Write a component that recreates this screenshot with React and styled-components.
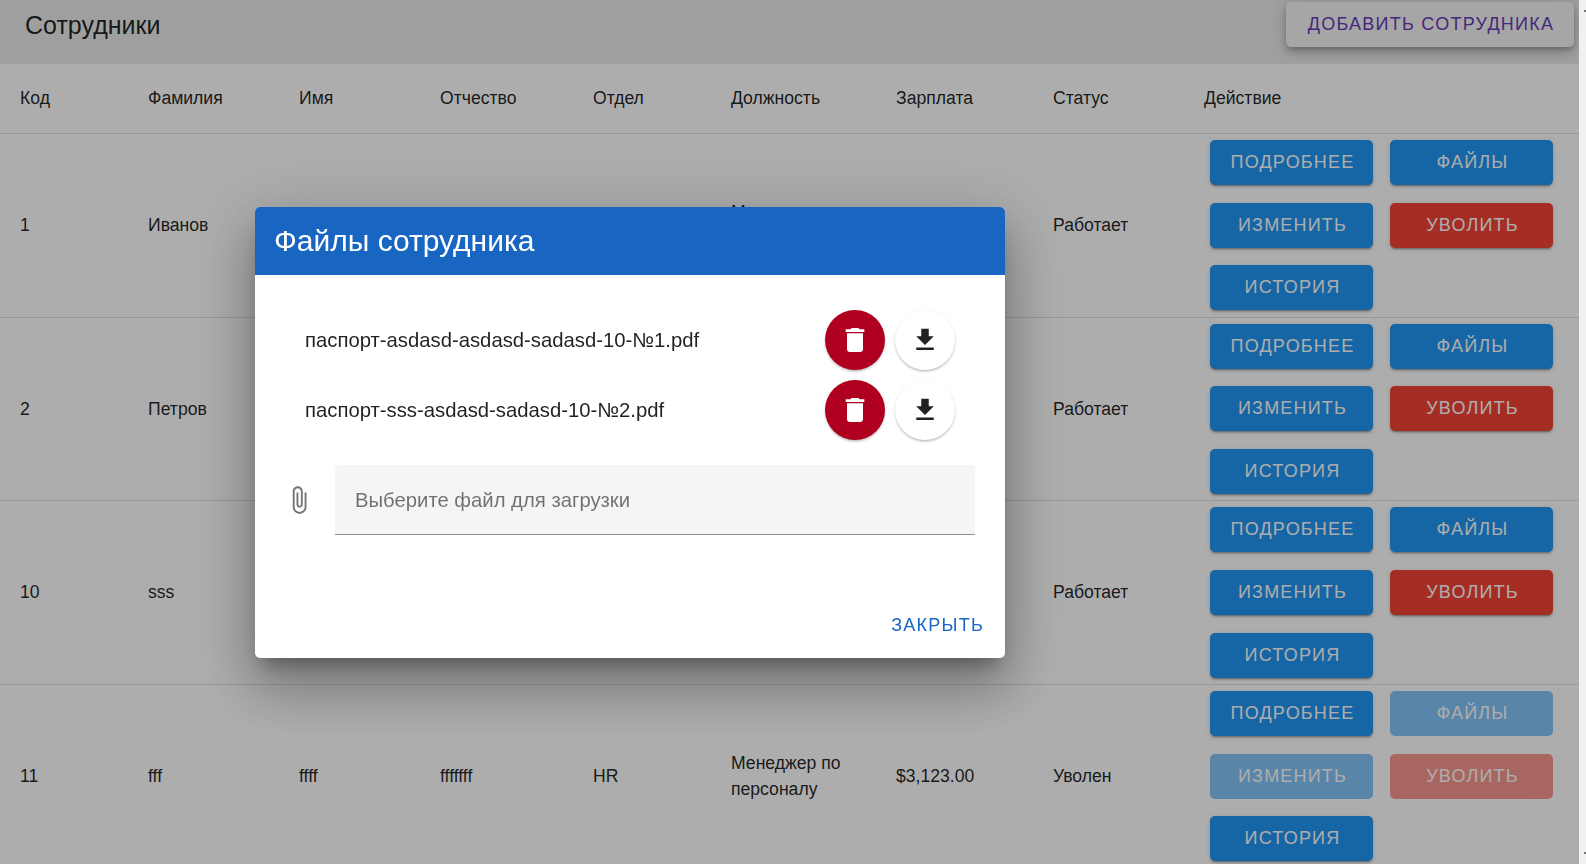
import styled, { createGlobalStyle } from "styled-components";

const employees = [
  { id: 1, last: "Иванов", first: "Иван", middle: "Иванович", dept: "HR", post: "Менеджер по персоналу", salary: "$1,000.00", status: "Работает" },
  { id: 2, last: "Петров", first: "Петр", middle: "Петрович", dept: "IT", post: "Программист", salary: "$2,000.00", status: "Работает" },
  { id: 10, last: "sss", first: "asdasd", middle: "sadasd", dept: "IT", post: "Программист", salary: "$1,500.00", status: "Работает" },
  { id: 11, last: "fff", first: "ffff", middle: "fffffff", dept: "HR", post: "Менеджер по персоналу", salary: "$3,123.00", status: "Уволен", fired: true },
];

const columns = ["Код", "Фамилия", "Имя", "Отчество", "Отдел", "Должность", "Зарплата", "Статус", "Действие"];

const files = ["паспорт-asdasd-asdasd-sadasd-10-№1.pdf", "паспорт-sss-asdasd-sadasd-10-№2.pdf"];

const TrashIcon = () => (
  <svg width="32" height="32" viewBox="0 0 24 24" fill="currentColor">
    <path d="M6 19c0 1.1.9 2 2 2h8c1.1 0 2-.9 2-2V7H6v12zM19 4h-3.5l-1-1h-5l-1 1H5v2h14V4z" />
  </svg>
);

const DownloadIcon = () => (
  <svg width="30" height="30" viewBox="0 0 24 24" fill="currentColor">
    <path d="M19 9h-4V3H9v6H5l7 7 7-7zM5 18v2h14v-2H5z" />
  </svg>
);

const ClipIcon = () => (
  <svg width="30" height="30" viewBox="0 0 24 24" fill="currentColor">
    <path d="M16.5 6v11.5c0 2.21-1.79 4-4 4s-4-1.79-4-4V5c0-1.38 1.12-2.5 2.5-2.5s2.5 1.12 2.5 2.5v10.5c0 .55-.45 1-1 1s-1-.45-1-1V6H10v9.5c0 1.38 1.12 2.5 2.5 2.5s2.5-1.12 2.5-2.5V5c0-2.21-1.79-4-4-4S7 2.79 7 5v12.5c0 3.04 2.46 5.5 5.5 5.5s5.5-2.46 5.5-5.5V6h-1.5z" />
  </svg>
);

const App = () => {
  return (
    <>
      <GlobalStyle />
      <Toolbar>
        <Title>Сотрудники</Title>
        <AddButton>Добавить сотрудника</AddButton>
      </Toolbar>
      <HeadRow>
        {columns.map((name) => (
          <div key={name}>{name}</div>
        ))}
      </HeadRow>
      {employees.map((e) => (
        <Row key={e.id}>
          <div>{e.id}</div>
          <div>{e.last}</div>
          <div>{e.first}</div>
          <div>{e.middle}</div>
          <div>{e.dept}</div>
          <div>{e.post}</div>
          <div>{e.salary}</div>
          <div>{e.status}</div>
          <Actions>
            <ActionButton>Подробнее</ActionButton>
            <ActionButton disabled={e.fired}>Файлы</ActionButton>
            <ActionButton disabled={e.fired}>Изменить</ActionButton>
            <ActionButton $danger disabled={e.fired}>
              Уволить
            </ActionButton>
            <ActionButton>История</ActionButton>
          </Actions>
        </Row>
      ))}
      <Overlay>
        <Dialog>
          <DialogHeader>Файлы сотрудника</DialogHeader>
          <DialogBody>
            {files.map((name) => (
              <FileRow key={name}>
                <FileName>{name}</FileName>
                <RoundButton $danger>
                  <TrashIcon />
                </RoundButton>
                <RoundButton>
                  <DownloadIcon />
                </RoundButton>
              </FileRow>
            ))}
            <UploadRow>
              <ClipBox>
                <ClipIcon />
              </ClipBox>
              <UploadField>Выберите файл для загрузки</UploadField>
            </UploadRow>
          </DialogBody>
          <DialogFooter>
            <CloseButton>Закрыть</CloseButton>
          </DialogFooter>
        </Dialog>
      </Overlay>
      <ScrollTrack />
    </>
  );
};

const GlobalStyle = createGlobalStyle`
  html {
    background: #f1f1f1;
  }
  body {
    margin: 0 7px 0 0;
    background: #fff;
    font-family: "Liberation Sans", Arial, sans-serif;
    color: rgba(0, 0, 0, 0.87);
  }
  * {
    box-sizing: border-box;
  }
`;

const ScrollTrack = styled.div`
  position: fixed;
  top: 0;
  right: 0;
  bottom: 0;
  width: 7px;
  background: #f1f1f1;
  &::before,
  &::after {
    content: "";
    position: absolute;
    right: 0;
    width: 2px;
    height: 2px;
    background: #777;
  }
  &::before {
    top: 10px;
  }
  &::after {
    bottom: 10px;
  }
`;

const Toolbar = styled.div`
  height: 64px;
  background: #ebebeb;
  display: flex;
  justify-content: space-between;
  align-items: flex-start;
  padding: 2px 5px 0 25px;
`;

const Title = styled.div`
  font-size: 25px;
  line-height: 46px;
`;

const AddButton = styled.button`
  width: 288px;
  height: 45px;
  padding: 0 0 0 2px;
  border: 0;
  border-radius: 5px;
  background: #f5f5f5;
  color: #673ab7;
  font-family: inherit;
  font-size: 18px;
  letter-spacing: 1.25px;
  text-transform: uppercase;
  box-shadow: 0 3px 5px -1px rgba(0, 0, 0, 0.2), 0 6px 10px 0 rgba(0, 0, 0, 0.14), 0 1px 18px 0 rgba(0, 0, 0, 0.12);
`;

const tableColumns = "128px 151px 141px 153px 138px 165px 157px 151px 1fr";

const HeadRow = styled.div`
  display: grid;
  grid-template-columns: ${tableColumns};
  align-items: center;
  height: 70px;
  padding-left: 20px;
  font-size: 17.6px;
  border-bottom: 1px solid rgba(0, 0, 0, 0.12);
`;

const Row = styled.div`
  display: grid;
  grid-template-columns: ${tableColumns};
  align-items: center;
  height: 183.6px;
  padding-left: 20px;
  font-size: 17.6px;
  line-height: 26px;
  border-bottom: 1px solid rgba(0, 0, 0, 0.12);
`;

const Actions = styled.div`
  display: grid;
  grid-template-columns: 163px 163px;
  gap: 17.6px 17px;
  padding-left: 6px;
`;

const ActionButton = styled.button`
  height: 45px;
  padding: 0 0 0 2px;
  border: 0;
  border-radius: 5px;
  background: ${(props) => (props.$danger ? "#f44336" : "#2196f3")};
  color: #fff;
  font-family: inherit;
  font-size: 18px;
  letter-spacing: 1.2px;
  text-transform: uppercase;
  box-shadow: 0 3px 1px -2px rgba(0, 0, 0, 0.2), 0 2px 2px 0 rgba(0, 0, 0, 0.14), 0 1px 5px 0 rgba(0, 0, 0, 0.12);
  &:disabled {
    opacity: 0.55;
    box-shadow: none;
  }
`;

const Overlay = styled.div`
  position: fixed;
  inset: 0 7px 0 0;
  background: rgba(0, 0, 0, 0.32);
`;

const Dialog = styled.div`
  position: absolute;
  left: 255px;
  top: 207px;
  width: 750px;
  height: 451px;
  display: flex;
  flex-direction: column;
  background: #fff;
  border-radius: 5px;
  box-shadow: 0 14px 18px -8px rgba(0, 0, 0, 0.32), 0 32px 50px 4px rgba(0, 0, 0, 0.2), 0 12px 64px 12px rgba(0, 0, 0, 0.14);
`;

const DialogHeader = styled.div`
  height: 68px;
  padding-left: 19px;
  display: flex;
  align-items: center;
  background: #1866c2;
  color: #fff;
  font-size: 30px;
  border-radius: 5px 5px 0 0;
`;

const DialogBody = styled.div`
  flex: 1;
  padding: 35px 30px 0 29px;
`;

const FileRow = styled.div`
  display: flex;
  align-items: center;
  gap: 10px;
  padding: 0 20px 0 21px;
  height: 60px;
  margin-bottom: 10px;
`;

const FileName = styled.div`
  flex: 1;
  font-size: 20.3px;
`;

const RoundButton = styled.div`
  width: 60px;
  height: 60px;
  border-radius: 50%;
  display: flex;
  align-items: center;
  justify-content: center;
  background: ${(props) => (props.$danger ? "#b00020" : "#fff")};
  color: ${(props) => (props.$danger ? "#fff" : "rgba(0, 0, 0, 0.87)")};
  box-shadow: 0 2px 3px -1px rgba(0, 0, 0, 0.25), 0 1px 3px 0 rgba(0, 0, 0, 0.12);
`;

const UploadRow = styled.div`
  display: flex;
  align-items: center;
  margin-top: 25px;
`;

const ClipBox = styled.div`
  width: 51px;
  display: flex;
  color: #757575;
`;

const UploadField = styled.div`
  flex: 1;
  height: 70px;
  display: flex;
  align-items: center;
  padding: 2px 0 0 20px;
  background: #f5f5f5;
  border-radius: 4px 4px 0 0;
  border-bottom: 1px solid rgba(0, 0, 0, 0.42);
  color: rgba(0, 0, 0, 0.54);
  font-size: 20.3px;
`;

const DialogFooter = styled.div`
  display: flex;
  justify-content: flex-end;
  padding: 0 21px 22px;
`;

const CloseButton = styled.div`
  color: #1866c2;
  font-size: 18px;
  letter-spacing: 1.25px;
  text-transform: uppercase;
`;

export default App;
